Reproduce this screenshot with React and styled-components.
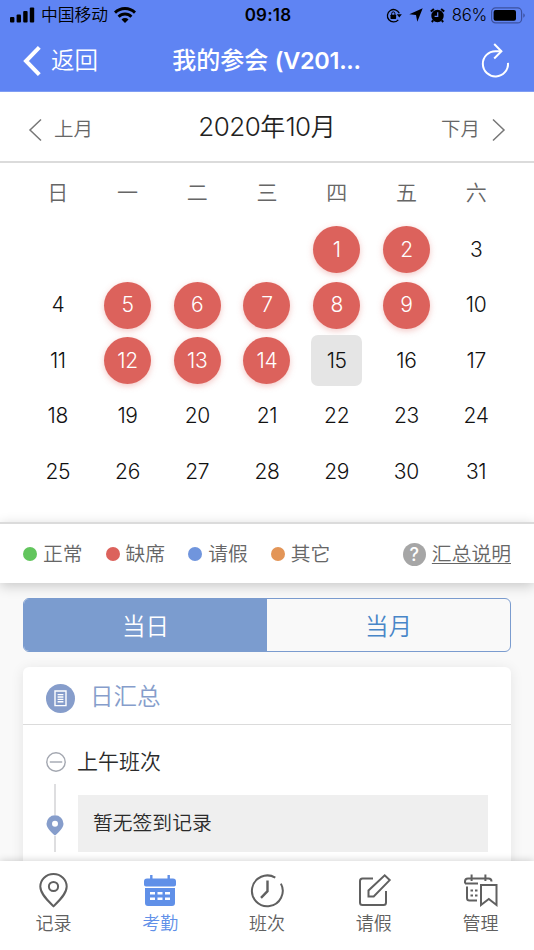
import React from "react"
import styled, { createGlobalStyle, css } from "styled-components"

const colors = {
  brand: "#5f84f3",
  red: "#dc625c",
  green: "#62c55d",
  blue: "#7095dd",
  orange: "#e39557",
  steel: "#7b9ccf",
  badge: "#869dcb",
  text: "#2a2a2a",
  gray: "#666",
  line: "#dbdbdb",
}

const GlobalStyle = createGlobalStyle`
  * {
    box-sizing: border-box;
  }
  body {
    margin: 0;
    font-family: Inter, "Noto Sans CJK SC", sans-serif;
    font-weight: 350;
    color: ${colors.text};
  }
  button {
    padding: 0;
    border: 0;
    background: none;
    color: inherit;
    font: inherit;
  }
  svg {
    display: block;
    flex: none;
  }
`

const Screen = styled.div`
  display: flex;
  flex-direction: column;
  height: 950px;
  overflow: hidden;
  background: #f9f9f9;
`

const Top = styled.header`
  flex: none;
  height: 92px;
  background: ${colors.brand};
  border-bottom: 1px solid #7f9df3;
`

const StatusBar = styled.div`
  display: grid;
  grid-template-columns: 1fr auto 1fr;
  align-items: center;
  height: 30px;
  padding: 0 8px 0 10px;
  color: #000;
  font-size: 16.8px;
  line-height: 30px;
`

const StatusSide = styled.div`
  display: flex;
  align-items: center;
  justify-content: ${props => (props.$end ? "flex-end" : "flex-start")};
  gap: ${props => (props.$end ? "7px" : "6px")};
`

const Carrier = styled.span`
  padding-top: 1px;
  line-height: 29px;
`

const Battery = styled.span`
  display: flex;
  align-items: center;
  gap: 4px;
  letter-spacing: -0.3px;
`

const Clock = styled.span`
  font-size: 17px;
  font-weight: 600;
  letter-spacing: 0.2px;
`

const NavBar = styled.nav`
  display: grid;
  grid-template-columns: 1fr auto 1fr;
  align-items: center;
  height: 61px;
  padding: 0 24px 0 23px;
  color: #fff;
`

const Back = styled.button`
  display: flex;
  align-items: center;
  gap: 10px;
  font-size: 23.5px;
  line-height: 34px;
`

const Title = styled.h1`
  margin: 0;
  font-size: 24px;
  line-height: 34px;
  font-weight: 500;
  .latin {
    font-size: 23.5px;
    font-weight: 600;
    letter-spacing: -0.3px;
  }
`

const Reload = styled.button`
  justify-self: end;
`

const MonthBar = styled.div`
  flex: none;
  display: grid;
  grid-template-columns: 1fr auto 1fr;
  align-items: center;
  height: 71px;
  padding: 0 28px;
  background: #fff;
  border-bottom: 2px solid ${colors.line};
`

const MonthStep = styled.button`
  display: flex;
  align-items: center;
  gap: 11px;
  justify-self: ${props => (props.$end ? "end" : "start")};
  padding-top: 5px;
  color: ${colors.gray};
  font-size: 19.5px;
  line-height: 30px;
  svg {
    margin-top: 2px;
  }
`

const MonthName = styled.h2`
  margin: 0;
  font-size: 25px;
  line-height: 36px;
  font-weight: 350;
  color: #222;
  .num {
    font-size: 26px;
    letter-spacing: -0.5px;
    font-weight: 300;
  }
`

const Calendar = styled.div`
  flex: none;
  display: grid;
  grid-template-columns: repeat(7, 1fr);
  grid-template-rows: 59px repeat(5, 55.5px);
  height: 359px;
  padding: 0 23px;
  justify-items: center;
  align-items: center;
  background: #fff;
`

const Weekday = styled.span`
  font-size: 21px;
  line-height: 30px;
  color: ${colors.gray};
`

const Day = styled.span`
  display: flex;
  align-items: center;
  justify-content: center;
  width: 47px;
  height: 47px;
  font-size: 21px;
  line-height: 30px;
  font-weight: 300;
  letter-spacing: -0.3px;
  color: #111;
  grid-column-start: ${props => props.$column || "auto"};
  ${props =>
    props.$absent &&
    css`
      border-radius: 50%;
      background: ${colors.red};
      color: #fff;
      box-shadow: 0 2px 6px rgba(220, 98, 92, 0.35);
    `}
  ${props =>
    props.$today &&
    css`
      width: 51px;
      height: 51px;
      border-radius: 7px;
      background: #e5e5e5;
    `}
`

const Legend = styled.div`
  flex: none;
  position: relative;
  display: flex;
  align-items: center;
  gap: 23px;
  height: 61px;
  padding: 0 23px;
  background: #fff;
  border-top: 2px solid ${colors.line};
  box-shadow: 0 3px 12px rgba(0, 0, 0, 0.2);
  color: ${colors.gray};
  font-size: 19.8px;
  line-height: 30px;
`

const LegendItem = styled.span`
  display: flex;
  align-items: center;
  gap: 6px;
  &:before {
    content: "";
    width: 14px;
    height: 14px;
    border-radius: 50%;
    background: ${props => props.$color};
  }
`

const Help = styled.a`
  display: flex;
  align-items: center;
  gap: 6px;
  margin-left: auto;
  .label {
    text-decoration: underline;
    text-decoration-thickness: 1px;
    text-underline-offset: 2px;
  }
`

const HelpMark = styled.span`
  width: 23px;
  height: 23px;
  margin-top: 2px;
  border-radius: 50%;
  background: #a6a6a6;
  color: #fff;
  font-size: 18px;
  font-weight: 500;
  line-height: 23px;
  text-align: center;
`

const Main = styled.main`
  flex: 1;
  min-height: 0;
  padding: 15px 23px 0;
`

const Segment = styled.div`
  display: flex;
  height: 54px;
  border: 1.5px solid ${colors.steel};
  border-radius: 6px;
  overflow: hidden;
`

const SegmentButton = styled.button`
  flex: 1;
  padding-top: 3px;
  font-size: 23.5px;
  line-height: 34px;
  color: ${props => (props.$active ? "#fff" : "#4886c8")};
  background: ${props => (props.$active ? colors.steel : "transparent")};
`

const Card = styled.section`
  height: 260px;
  margin-top: 15px;
  border-radius: 6px;
  background: #fff;
  box-shadow: 0 2px 14px rgba(0, 0, 0, 0.09);
`

const CardHead = styled.div`
  display: flex;
  align-items: center;
  gap: 15px;
  height: 58px;
  padding: 2px 23px 0;
  border-bottom: 1.5px solid ${colors.line};
  color: ${colors.badge};
  font-size: 23.5px;
  line-height: 34px;
`

const Badge = styled.span`
  display: flex;
  align-items: center;
  justify-content: center;
  width: 29px;
  height: 29px;
  margin-top: 4px;
  border-radius: 50%;
  background: ${colors.badge};
`

const Shift = styled.div`
  display: flex;
  align-items: center;
  gap: 11px;
  height: 59px;
  padding: 15px 23px 0;
  font-size: 21px;
  line-height: 30px;
`

const Timeline = styled.div`
  display: flex;
  gap: 13px;
  padding: 0 23px 0 22px;
`

const Track = styled.div`
  display: flex;
  flex-direction: column;
  align-items: center;
  width: 20px;
  height: 68px;
  &:before,
  &:after {
    content: "";
    width: 2px;
    background: #dedee0;
  }
  &:before {
    height: 31px;
  }
  &:after {
    flex: 1;
  }
`

const Note = styled.p`
  flex: 1;
  height: 57px;
  margin: 11px 0 0;
  padding: 0 15px;
  background: #efefef;
  font-size: 19.8px;
  line-height: 56px;
`

const TabBar = styled.footer`
  flex: none;
  position: relative;
  display: grid;
  grid-template-columns: repeat(5, 1fr);
  height: 89px;
  padding-top: 11px;
  background: #fff;
  box-shadow: 0 0 8px rgba(0, 0, 0, 0.2);
`

const Tab = styled.button`
  display: flex;
  flex-direction: column;
  align-items: center;
  gap: 2px;
  color: ${props => (props.$active ? "#6090e8" : "#606060")};
  font-size: 18px;
  line-height: 28px;
`

const SignalIcon = () => (
  <svg width="25" height="16" viewBox="0 0 25 16">
    <rect x="0" y="10" width="4.4" height="5.5" rx="1" />
    <rect x="6.6" y="7.5" width="4.4" height="8" rx="1" />
    <rect x="13.2" y="4" width="4.4" height="11.5" rx="1" />
    <rect x="19.8" y="0.5" width="4.4" height="15" rx="1" />
  </svg>
)

const WifiIcon = () => (
  <svg width="22" height="16" viewBox="0 0 22 16" fill="none" stroke="#000" strokeWidth="2.9">
    <path d="M1 5.6a14.2 14.2 0 0 1 20 0" />
    <path d="M4.6 9.7a9 9 0 0 1 12.8 0" />
    <path d="M11 16l-3.5-3.5a5 5 0 0 1 7 0z" fill="#000" stroke="none" />
  </svg>
)

const LockIcon = () => (
  <svg width="16" height="15" viewBox="0 0 16 15">
    <path
      d="M12.3 11.8A6.2 6.2 0 1 1 13.3 5.3"
      fill="none"
      stroke="#000"
      strokeWidth="1.3"
    />
    <path d="M10.8 6.2h5L13.3 9.6z" />
    <rect x="4.5" y="6.7" width="5.6" height="4.2" rx="0.6" />
    <path d="M5.7 7V5.5a1.6 1.6 0 0 1 3.2 0V7" fill="none" stroke="#000" />
  </svg>
)

const LocationIcon = () => (
  <svg width="14" height="14" viewBox="0 0 14 14">
    <path d="M13.7 0.3L8.3 13.7 7 7 0.3 6.2z" />
  </svg>
)

const AlarmIcon = () => (
  <svg width="15" height="15" viewBox="0 0 15 15">
    <circle cx="7.5" cy="8" r="6.2" />
    <path d="M0.8 3.6L3.9 1M14.2 3.6L11.1 1M3.2 12.4L1.8 14M11.8 12.4l1.4 1.6" stroke="#000" strokeWidth="2" />
    <path d="M7.7 4.3v4H4.6" fill="none" stroke={colors.brand} strokeWidth="1.2" />
  </svg>
)

const BatteryIcon = () => (
  <svg width="35" height="17" viewBox="0 0 35 17">
    <rect x="0.6" y="0.9" width="30" height="15" rx="4" fill="none" stroke="#3c51a0" strokeWidth="1.2" />
    <rect x="2.6" y="3" width="22.4" height="10.8" rx="2" />
    <path d="M32.3 6.3a2.4 2.4 0 0 1 0 4.4z" fill="#3c51a0" />
  </svg>
)

const BackIcon = () => (
  <svg width="18" height="30" viewBox="0 0 18 30" fill="none" stroke="#fff" strokeWidth="4">
    <path d="M16.3 1.4L3 15l13.3 13.6" />
  </svg>
)

const ReloadIcon = () => (
  <svg width="29" height="35" viewBox="0 0 29 35" fill="none" stroke="#fff" strokeWidth="2">
    <path d="M27 19.8A12.6 12.6 0 1 1 14.6 8.2h5.6" />
    <path d="M13.2 1l7.2 7.2-7.2 7.3" />
  </svg>
)

const Chevron = ({ right }) => (
  <svg width="15" height="24" viewBox="0 0 15 24" fill="none" stroke="#777" strokeWidth="1.5">
    <path d={right ? "M2 1.5L13 12 2 22.5" : "M13 1.5L2 12l11 10.5"} />
  </svg>
)

const DocIcon = () => (
  <svg width="13" height="17" viewBox="0 0 13 17" fill="none" stroke="#fff" strokeWidth="1.4">
    <path d="M1 1h11v14.6H1zM3.6 4.6h5.8M3.6 7h5.8M3.6 9.4h5.8M3.6 11.8h5.8" />
  </svg>
)

const MinusIcon = () => (
  <svg width="20" height="20" viewBox="0 0 20 20" fill="none" stroke="#a3a7b0" strokeWidth="1.4">
    <circle cx="10" cy="10" r="9.2" />
    <path d="M3.8 10h12.4" />
  </svg>
)

const PinIcon = () => (
  <svg width="18" height="21" viewBox="0 0 18 21">
    <path
      d="M9 0.3a8.5 8.5 0 0 1 8.5 8.5c0 4-4.2 8.2-8.5 11.8C4.7 17 0.5 12.8 0.5 8.8A8.5 8.5 0 0 1 9 0.3z"
      fill={colors.badge}
    />
    <circle cx="9" cy="8.8" r="3" fill="#fff" />
  </svg>
)

const tabIcon = {
  width: 36,
  height: 36,
  viewBox: "0 0 36 36",
  fill: "none",
  stroke: "currentColor",
  strokeWidth: 2,
}

const RecordIcon = () => (
  <svg {...tabIcon}>
    <path d="M18.5 2c7.4 0 13.2 5.6 13.2 12.6C31.700 22 24 29 18.500 34.200 13 29 5.300 22 5.300 14.600 5.300 7.600 11.100 2 18.500 2z" />
    <circle cx="18.5" cy="14.5" r="4.6" />
  </svg>
)

const AttendanceIcon = () => (
  <svg {...tabIcon}>
    <path
      d="M5 6.500h26a3 3 0 0 1 3 3v3q0 2-2 2H4q-2 0-2-2V9.500a3 3 0 0 1 3-3zM3 15.900h30V31q0 3-3 3H6q-3 0-3-3z"
      fill="currentColor"
      stroke="none"
    />
    <path d="M9.300 3v6M26.700 3v6" strokeWidth="2.400" />
    <path
      d="M8 21.200h5M15.500 21.200h5M23 21.200h5M8 26.700h5M15.500 26.700h5M23 26.700h5"
      stroke="#fff"
      strokeWidth="2.400"
    />
  </svg>
)

const ShiftIcon = () => (
  <svg {...tabIcon}>
    <path d="M26.300 5.700A15.400 15.400 0 1 0 31.900 11.600" />
    <path d="M18.500 8.500v10.700L12 25.800" strokeWidth="2.400" />
  </svg>
)

const LeaveIcon = () => (
  <svg {...tabIcon}>
    <path d="M17 6.500H6.500a2.500 2.500 0 0 0-2.500 2.500v21.500A2.500 2.500 0 0 0 6.500 33h21a2.500 2.500 0 0 0 2.500-2.500V19" />
    <path d="M12.500 24.500v-6L28.700 3.300l5 4.800-16 16.400z" />
  </svg>
)

const ManageIcon = () => (
  <svg {...tabIcon}>
    <path d="M2 11.500V9.500q0-3 3-3h20.500q3 0 3 3M2 11.500h13M8.600 2.500v6.500M22.400 2.500v6.500M4 14.500V26q0 2.500 2.500 2.500H14" />
    <path d="M7.500 18.500h2.500M12 18.500h2.500M7.500 23.500h2.500M12 23.500h2.500" />
    <path d="M18 13h15.500v20l-7.700-6-7.800 6z" />
  </svg>
)

const weekdays = ["日", "一", "二", "三", "四", "五", "六"]
const days = Array.from({ length: 31 }, (_, i) => i + 1)
const absentDays = [1, 2, 5, 6, 7, 8, 9, 12, 13, 14]

const legend = [
  { label: "正常", color: colors.green },
  { label: "缺席", color: colors.red },
  { label: "请假", color: colors.blue },
  { label: "其它", color: colors.orange },
]

const tabs = [
  { label: "记录", Icon: RecordIcon },
  { label: "考勤", Icon: AttendanceIcon, active: true },
  { label: "班次", Icon: ShiftIcon },
  { label: "请假", Icon: LeaveIcon },
  { label: "管理", Icon: ManageIcon },
]

const App = () => (
  <Screen>
    <GlobalStyle />
    <Top>
      <StatusBar>
        <StatusSide>
          <SignalIcon />
          <Carrier>中国移动</Carrier>
          <WifiIcon />
        </StatusSide>
        <Clock>09:18</Clock>
        <StatusSide $end>
          <LockIcon />
          <LocationIcon />
          <AlarmIcon />
          <Battery>
            86%
            <BatteryIcon />
          </Battery>
        </StatusSide>
      </StatusBar>
      <NavBar>
        <Back>
          <BackIcon />
          返回
        </Back>
        <Title>
          我的参会 <span className="latin">(V201...</span>
        </Title>
        <Reload aria-label="刷新">
          <ReloadIcon />
        </Reload>
      </NavBar>
    </Top>
    <MonthBar>
      <MonthStep>
        <Chevron />
        上月
      </MonthStep>
      <MonthName>
        <span className="num">2020</span>年<span className="num">10</span>月
      </MonthName>
      <MonthStep $end>
        下月
        <Chevron right />
      </MonthStep>
    </MonthBar>
    <Calendar>
      {weekdays.map(name => (
        <Weekday key={name}>{name}</Weekday>
      ))}
      {days.map(day => (
        <Day
          key={day}
          $column={day === 1 ? 5 : undefined}
          $absent={absentDays.includes(day)}
          $today={day === 15}
        >
          {day}
        </Day>
      ))}
    </Calendar>
    <Legend>
      {legend.map(item => (
        <LegendItem key={item.label} $color={item.color}>
          {item.label}
        </LegendItem>
      ))}
      <Help>
        <HelpMark>?</HelpMark>
        <span className="label">汇总说明</span>
      </Help>
    </Legend>
    <Main>
      <Segment>
        <SegmentButton $active>当日</SegmentButton>
        <SegmentButton>当月</SegmentButton>
      </Segment>
      <Card>
        <CardHead>
          <Badge>
            <DocIcon />
          </Badge>
          日汇总
        </CardHead>
        <Shift>
          <MinusIcon />
          上午班次
        </Shift>
        <Timeline>
          <Track>
            <PinIcon />
          </Track>
          <Note>暂无签到记录</Note>
        </Timeline>
      </Card>
    </Main>
    <TabBar>
      {tabs.map(({ label, Icon, active }) => (
        <Tab key={label} $active={active}>
          <Icon />
          {label}
        </Tab>
      ))}
    </TabBar>
  </Screen>
)

export default App
